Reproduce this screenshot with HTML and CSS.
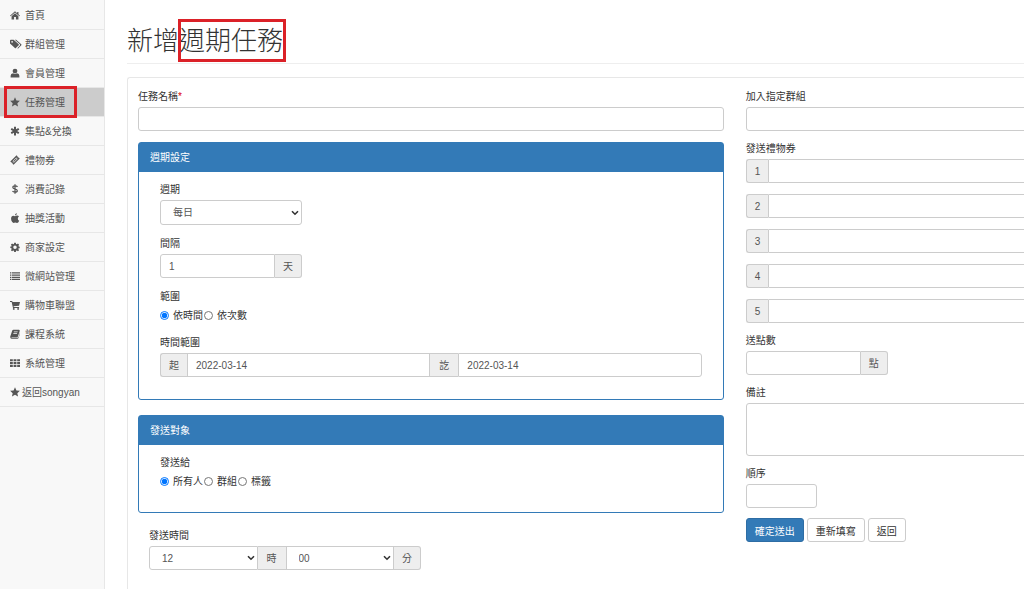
FILE: index.html
```html
<!DOCTYPE html>
<html lang="zh-Hant">
<head>
    <meta charset="UTF-8">
    <meta name="viewport" content="width=device-width, initial-scale=1.0">
    <title>新增週期任務</title>
    <link rel="stylesheet" href="styles.css">
</head>
<body>
    <div class="wrapper">
        <nav class="sidebar">
            <ul>
                <li><a href="#"><svg viewBox="0 0 16 16"><path d="M8 2 0 9l1 1 7-6 7 6 1-1-2.500-2.200V3h-2v2z"/><path d="M8 5.200 2.500 10v5h4v-4h3v4h4v-5z"/></svg>首頁</a></li>
                <li><a href="#"><svg class="wide" viewBox="0 0 20 16"><path fill-rule="evenodd" d="M0 2.500Q0 1 1.500 1H6l8.500 7.500q.8.8 0 1.600l-4.700 4.700q-.8.800-1.600 0L0 7zM3.500 3a1.400 1.400 0 1 0 0 2.800 1.400 1.400 0 0 0 0-2.800z"/><path d="M8 1h2.200l8.600 7.500q.8.8 0 1.600L14 15q-.8.7-1.700 0l4.200-4.600q.8-1 0-1.800z"/></svg>群組管理</a></li>
                <li><a href="#"><svg viewBox="0 0 16 16"><circle cx="8" cy="4.800" r="3.800"/><path d="M1 15v-2.500Q1 9 5 8.500q3 2 6 0 4 .5 4 4V15z"/></svg>會員管理</a></li>
                <li class="active"><a href="#"><svg viewBox="0 0 16 16"><path d="m8 .5 2.300 5 5.500.6-4.100 3.700 1.200 5.400L8 12.400l-4.900 2.800 1.200-5.400L.2 6.100l5.500-.6z"/></svg>任務管理</a></li>
                <li><a href="#"><svg viewBox="0 0 16 16"><path d="M6.400 1h3.200v4.200l3.700-2.100 1.600 2.800L11.300 8l3.600 2.100-1.600 2.800-3.700-2.100V15H6.400v-4.200l-3.700 2.100-1.600-2.800L4.700 8 1.100 5.900l1.600-2.800 3.700 2.100z"/></svg>集點&amp;兌換</a></li>
                <li><a href="#"><svg viewBox="0 0 16 16"><path fill-rule="evenodd" d="m10.500.5 1.700 1.700q-.3 1 .3 1.500.6.500 1.500.300l1.600 1.700-9.900 9.800L4 13.800q.2-1-.3-1.500-.6-.5-1.500-.3L.5 10.300zM10 4 4 10l2.200 2.200 6-6z"/><path d="m10 5.200 1 1-4.800 4.800-1-1z"/></svg>禮物券</a></li>
                <li><a href="#"><svg viewBox="0 0 16 16"><path class="line" d="M12 4.500Q11 3 8 3 4.500 3 4.500 5.300 4.500 7.300 8 8t3.700 2.800Q11.700 13 8 13q-3 0-4-1.800M8 .5v15"/></svg>消費記錄</a></li>
                <li><a href="#"><svg viewBox="0 0 16 16"><path d="M11 0q.2 3.300-3.200 4Q7.800 1 11 0zM8 5q2-1 3.500-.9Q13.400 4.300 14.300 5.700q-2 1.300-1.800 3.300.1 2.200 2.200 3.200-1.500 3.600-3.400 3.600-1.500-.6-3-.6t-2.600.6Q3.500 15.800 2 11.500 1 7.500 2.700 5.500 4.500 3.600 8 5z"/></svg>抽獎活動</a></li>
                <li><a href="#"><svg viewBox="0 0 16 16"><path fill-rule="evenodd" d="M6.700 1h2.600l.4 2 1.300.500L12.700 2.400l1.900 1.900L13.500 6l.5 1.200 1.500.3v2.300l-1.700.3-.5 1.200 1.200 1.700-1.800 1.800-1.700-1.200-1.300.5-.4 2H6.700l-.4-2-1.300-.5-1.700 1.200-1.800-1.800 1.200-1.700-.5-1.200L.500 9.500V7.200L2.200 7l.4-1.200L1.400 4.300l1.900-1.900L5 3.500 6.300 3zM8 5.500a2.800 2.800 0 1 0 0 5.600 2.800 2.800 0 0 0 0-5.600z"/></svg>商家設定</a></li>
                <li><a href="#"><svg viewBox="0 0 16 16"><path d="M0 2h2v2H0zM3 2h13v2H3zM0 5.500h2v2H0zM3 5.500h13v2H3zM0 9h2v2H0zM3 9h13v2H3zM0 12.500h2v2H0zM3 12.500h13v2H3z"/></svg>微網站管理</a></li>
                <li><a href="#"><svg viewBox="0 0 16 16"><path d="M0 1.500h3.500L4 3h12l-1.500 6.200-8.800.9.300 1.200h8.500v1.400H4.800L2.600 3H0z"/><circle cx="6" cy="14.200" r="1.500"/><circle cx="13" cy="14.200" r="1.500"/></svg>購物車聯盟</a></li>
                <li><a href="#"><svg viewBox="0 0 16 16"><path fill-rule="evenodd" d="M5.500 1H14q1.800.3 1.500 2l-2.800 9q-.4 1-1.700 1H3q-1 .2-.8 1H12q1.300 0 1.700-1.200L16 5.500q.3 1 0 1.700l-2.200 6.800q-.5 1.500-2 1.500H2.500Q0 15 .4 12L3.600 2.500Q4.200 1 5.500 1zM6.300 3.800 6 5h6l.4-1.200zM5.500 6.500l-.4 1.200h6l.4-1.200z"/></svg>課程系統</a></li>
                <li><a href="#"><svg viewBox="0 0 16 16"><path d="M0 2h4.500v3.300H0zM5.700 2h4.600v3.300H5.700zM11.500 2H16v3.300h-4.500zM0 6.500h4.500v3.300H0zM5.700 6.500h4.600v3.300H5.700zM11.500 6.500H16v3.300h-4.500zM0 11h4.500v3.300H0zM5.700 11h4.600v3.300H5.700zM11.500 11H16v3.300h-4.500z"/></svg>系統管理</a></li>
                <li class="back"><a href="#"><svg viewBox="0 0 16 16"><path d="m8 .5 2.300 5 5.500.6-4.100 3.700 1.200 5.400L8 12.400l-4.900 2.800 1.200-5.400L.2 6.100l5.500-.6z"/></svg>返回songyan</a></li>
            </ul>
        </nav>

        <main class="content">
            <h1>新增<span class="highlight">週期任務</span></h1>

            <form class="task-form">
                <div class="col-main">
                    <div class="form-group">
                        <label for="name">任務名稱<span class="required">*</span></label>
                        <input type="text" class="form-control" id="name">
                    </div>

                    <section class="panel">
                        <h2 class="panel-heading">週期設定</h2>
                        <div class="panel-body">
                            <div class="form-group">
                                <label for="cycle">週期</label>
                                <select class="form-control cycle" id="cycle">
                                    <option>每日</option>
                                    <option>每週</option>
                                    <option>每月</option>
                                </select>
                            </div>
                            <div class="form-group">
                                <label for="interval">間隔</label>
                                <div class="input-group short">
                                    <input type="text" class="form-control" id="interval" value="1">
                                    <span class="addon">天</span>
                                </div>
                            </div>
                            <fieldset class="form-group">
                                <legend>範圍</legend>
                                <div class="radios">
                                    <label><input type="radio" name="range" checked>依時間</label>
                                    <label><input type="radio" name="range">依次數</label>
                                </div>
                            </fieldset>
                            <div class="form-group">
                                <label for="start">時間範圍</label>
                                <div class="input-group">
                                    <span class="addon">起</span>
                                    <input type="text" class="form-control" id="start" value="2022-03-14">
                                    <span class="addon">訖</span>
                                    <input type="text" class="form-control" id="end" aria-label="訖" value="2022-03-14">
                                </div>
                            </div>
                        </div>
                    </section>

                    <section class="panel">
                        <h2 class="panel-heading">發送對象</h2>
                        <div class="panel-body">
                            <fieldset class="form-group">
                                <legend>發送給</legend>
                                <div class="radios">
                                    <label><input type="radio" name="target" checked>所有人</label>
                                    <label><input type="radio" name="target">群組</label>
                                    <label><input type="radio" name="target">標籤</label>
                                </div>
                            </fieldset>
                        </div>
                    </section>

                    <div class="form-group send-time">
                        <label for="hour">發送時間</label>
                        <div class="input-group">
                            <select class="form-control" id="hour">
                                <option>12</option>
                            </select>
                            <span class="addon">時</span>
                            <select class="form-control" id="minute" aria-label="分">
                                <option>00</option>
                            </select>
                            <span class="addon">分</span>
                        </div>
                    </div>
                </div>

                <div class="col-side">
                    <div class="form-group">
                        <label for="group">加入指定群組</label>
                        <input type="text" class="form-control" id="group">
                    </div>
                    <div class="form-group">
                        <label for="gift1">發送禮物券</label>
                        <div class="gifts">
                            <div class="input-group">
                                <span class="addon">1</span>
                                <input type="text" class="form-control" id="gift1">
                            </div>
                            <div class="input-group">
                                <span class="addon">2</span>
                                <input type="text" class="form-control" aria-label="禮物券 2">
                            </div>
                            <div class="input-group">
                                <span class="addon">3</span>
                                <input type="text" class="form-control" aria-label="禮物券 3">
                            </div>
                            <div class="input-group">
                                <span class="addon">4</span>
                                <input type="text" class="form-control" aria-label="禮物券 4">
                            </div>
                            <div class="input-group">
                                <span class="addon">5</span>
                                <input type="text" class="form-control" aria-label="禮物券 5">
                            </div>
                        </div>
                    </div>
                    <div class="form-group">
                        <label for="points">送點數</label>
                        <div class="input-group short">
                            <input type="text" class="form-control" id="points">
                            <span class="addon">點</span>
                        </div>
                    </div>
                    <div class="form-group">
                        <label for="note">備註</label>
                        <textarea class="form-control" id="note"></textarea>
                    </div>
                    <div class="form-group">
                        <label for="order">順序</label>
                        <input type="text" class="form-control order" id="order">
                    </div>
                    <div class="buttons">
                        <button type="submit" class="btn btn-primary">確定送出</button>
                        <button type="reset" class="btn">重新填寫</button>
                        <button type="button" class="btn">返回</button>
                    </div>
                </div>
            </form>
        </main>
    </div>
</body>
</html>
```
FILE: styles.css
```css
* {
    box-sizing: border-box;
}

body {
    margin: 0;
    font-family: "Liberation Sans", "Noto Sans CJK TC", sans-serif;
    font-size: 10px;
    line-height: 15px;
    color: #333;
    background-color: #fff;
}

.wrapper {
    display: flex;
    min-height: 100vh;
}

/* Sidebar */
.sidebar {
    flex: 0 0 105px;
    padding-top: 1px;
    background-color: #f8f8f8;
    border-right: 1px solid #e7e7e7;
}

.sidebar ul {
    list-style: none;
    margin: 0;
    padding: 0;
}

.sidebar li {
    position: relative;
    border-bottom: 1px solid #e7e7e7;
}

.sidebar a {
    display: flex;
    align-items: center;
    gap: 5px;
    height: 28px;
    padding-left: 10px;
    color: #555;
    text-decoration: none;
}

.sidebar svg {
    width: 10px;
    height: 10px;
    fill: #555;
}

.sidebar svg.wide {
    width: 12px;
    margin-right: -2px;
}

.sidebar .line {
    fill: none;
    stroke: #555;
    stroke-width: 2;
}

.sidebar .back a {
    gap: 2px;
}

.sidebar .active {
    background-color: #ccc;
}

.sidebar .active::after {
    content: "";
    position: absolute;
    inset: -2px 27px -2px 4px;
    border: 3px solid #db2128;
}

/* Content */
.content {
    flex: 1;
    min-width: 0;
    padding: 22px 0 0 22px;
    overflow: hidden;
}

h1 {
    margin: 0 0 13px;
    padding-bottom: 3px;
    border-bottom: 1px solid #eee;
    font-size: 26px;
    font-weight: 300;
    line-height: 38px;
}

.highlight {
    position: relative;
}

.highlight::after {
    content: "";
    position: absolute;
    inset: -7px -3px -6px -1px;
    border: 3px solid #db2128;
}

.task-form {
    display: grid;
    grid-template-columns: 66.1% 66.1%;
    gap: 22px;
    padding: 11px 0 11px 10px;
    border: 1px solid #e7e7e7;
    border-right: 0;
    border-radius: 3px 0 0 3px;
}

.form-group {
    margin: 0 0 11px;
    padding: 0;
    border: 0;
}

.col-side .form-group {
    margin-bottom: 10px;
}

.form-group > label,
legend {
    display: block;
    margin-bottom: 3px;
    padding: 0;
}

.required {
    color: #d00;
}

.form-control {
    display: block;
    width: 100%;
    height: 24px;
    padding: 3px 8px;
    border: 1px solid #ccc;
    border-radius: 3px;
    background-color: #fff;
    color: #555;
    font-family: inherit;
    font-size: 10px;
}

select.form-control {
    appearance: none;
    padding: 0 12px;
    background-image: url("data:image/svg+xml,%3Csvg xmlns='http://www.w3.org/2000/svg' viewBox='0 0 8 6'%3E%3Cpath d='M1 1.200l3 3 3-3' fill='none' stroke='%23333' stroke-width='1.600'/%3E%3C/svg%3E");
    background-repeat: no-repeat;
    background-position: right 2px center;
    background-size: 8px 6px;
}

.form-control.cycle {
    width: 142px;
    height: 25px;
}

.form-control.order {
    width: 71px;
}

textarea.form-control {
    height: 53px;
    resize: none;
}

.input-group {
    display: flex;
}

.input-group.short {
    width: 142px;
}

.input-group .form-control {
    flex: 1;
    min-width: 0;
}

.input-group > * {
    border-radius: 0;
}

.input-group > :first-child {
    border-radius: 3px 0 0 3px;
}

.input-group > :last-child {
    border-radius: 0 3px 3px 0;
}

.addon {
    display: flex;
    align-items: center;
    padding: 0 9px;
    border: 1px solid #ccc;
    background-color: #eee;
    color: #555;
}

.addon:not(:last-child) {
    border-right: 0;
}

.addon:not(:first-child) {
    border-left: 0;
}

.addon:first-child,
.addon:last-child {
    padding: 0 8px;
}

.gifts {
    display: grid;
    gap: 11px;
}

.radios {
    display: flex;
    gap: 1px;
    line-height: 17px;
}

.radios label {
    display: flex;
    align-items: center;
}

.radios input {
    width: 9px;
    height: 9px;
    margin: 0 4px 0 0;
}

/* Panels */
.panel {
    margin-bottom: 15px;
    border: 1px solid #337ab7;
    border-radius: 3px;
}

.panel-heading {
    margin: 0;
    padding: 7px 11px;
    background-color: #337ab7;
    color: #fff;
    font-size: 10px;
    font-weight: normal;
    line-height: 15px;
}

.panel-body {
    padding: 10px 21px 11px;
}

.send-time {
    padding-left: 11px;
}

.send-time .input-group {
    width: 272px;
}

/* Buttons */
.buttons {
    display: flex;
    gap: 3px;
}

.btn {
    height: 24px;
    padding: 0 8px;
    border: 1px solid #ccc;
    border-radius: 3px;
    background-color: #fff;
    color: #333;
    font-family: inherit;
    font-size: 10px;
    cursor: pointer;
}

.btn-primary {
    background-color: #337ab7;
    border-color: #2e6da4;
    color: #fff;
}
```
